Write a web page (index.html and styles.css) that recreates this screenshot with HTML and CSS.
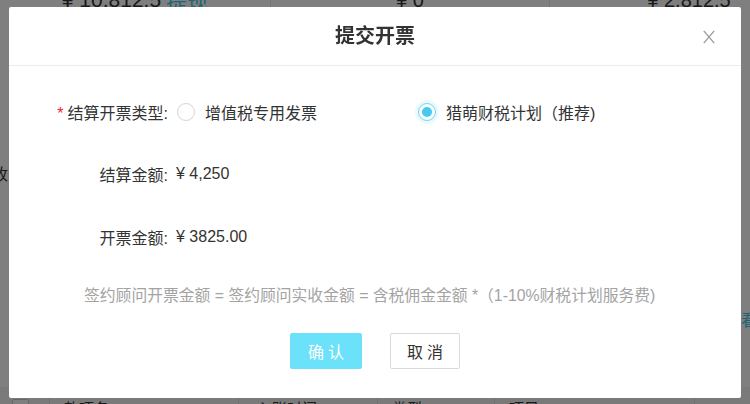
FILE: index.html
```html
<!DOCTYPE html>
<html lang="zh-CN">
<head>
<meta charset="utf-8">
<title>提交开票</title>
<link rel="stylesheet" href="styles.css">
</head>
<body>
<div class="page">
  <div class="summary">
    <div class="sum-cell">¥ 10,812.5 <span class="link">提现</span></div>
    <div class="sum-cell">¥ 0</div>
    <div class="sum-cell">¥ 2,812.5</div>
  </div>
  <div class="mid">
    <div class="stub-left">实收</div>
    <div class="stub-right"><span class="link">查看</span></div>
  </div>
  <div class="thead">
    <div class="th th-check"><span class="checkbox"></span></div>
    <div class="th th-a">款项名</div>
    <div class="th th-b">入账时间</div>
    <div class="th th-c">类型</div>
    <div class="th th-d">项目</div>
  </div>
</div>

<div class="mask"></div>

<div class="modal">
  <div class="modal-header">
    <div class="modal-title">提交开票</div>
    <span class="modal-close" aria-label="关闭">
      <svg width="12" height="14" viewBox="0 0 12 14"><path d="M0.8 0.8 L11.2 13.2 M11.2 0.8 L0.8 13.2" stroke="#9a9a9a" stroke-width="1.3" fill="none"/></svg>
    </span>
  </div>
  <div class="modal-body">
    <div class="form-row">
      <div class="form-label"><span class="req">*</span>结算开票类型:</div>
      <div class="form-value">
        <label class="radio-option">
          <span class="radio"></span>
          <span class="radio-text">增值税专用发票</span>
        </label>
        <label class="radio-option radio-option-second">
          <span class="radio radio-checked"></span>
          <span class="radio-text">猎萌财税计划（推荐)</span>
        </label>
      </div>
    </div>
    <div class="form-row row-gap">
      <div class="form-label">结算金额:</div>
      <div class="form-value">¥ 4,250</div>
    </div>
    <div class="form-row row-gap">
      <div class="form-label">开票金额:</div>
      <div class="form-value">¥ 3825.00</div>
    </div>
    <div class="note">签约顾问开票金额 = 签约顾问实收金额 = 含税佣金金额 *（1-10%财税计划服务费)</div>
    <div class="actions">
      <button class="btn btn-primary">确认</button>
      <button class="btn btn-default">取消</button>
    </div>
  </div>
</div>
</body>
</html>
```

FILE: styles.css
```css
* { box-sizing: border-box; }

html, body {
  margin: 0;
  padding: 0;
  width: 750px;
  height: 404px;
  overflow: hidden;
  background: #fff;
  font-family: "Liberation Sans", "Noto Sans CJK SC", sans-serif;
  color: #333;
}

.link { color: #3cc8e8; }

/* background page */
.page {
  margin-top: -21px;
}

.summary {
  display: grid;
  grid-template-columns: 271px 279px 279px;
  height: 42px;
}

.sum-cell {
  display: flex;
  align-items: center;
  justify-content: center;
  gap: 5px;
  font-size: 20px;
  color: #333;
  border-right: 1px solid #e6e6e6;
  white-space: nowrap;
}

.sum-cell:first-child { font-size: 21px; }

.mid {
  position: relative;
  height: 366px;
}

.stub-left {
  position: absolute;
  left: -24px;
  top: 144px;
  font-size: 16px;
  line-height: 20px;
}

.stub-right {
  position: absolute;
  left: 725px;
  top: 290px;
  font-size: 16px;
  line-height: 20px;
  white-space: nowrap;
}

.thead {
  display: grid;
  grid-template-columns: 50px 189px 139px 117px 200px;
  height: 40px;
  background: #f5f5f5;
  font-size: 15px;
}

.th {
  display: flex;
  align-items: center;
  padding-left: 14px;
  border-right: 1px solid #e3e3e3;
  color: #333;
  white-space: nowrap;
}

.th-check { padding-left: 12px; }
.th-b { padding-left: 18px; }

.checkbox {
  width: 17px;
  height: 17px;
  border: 1px solid #cfcfcf;
  background: #fff;
  border-radius: 2px;
}

/* mask */
.mask {
  position: fixed;
  inset: 0;
  background: rgba(0, 0, 0, 0.5);
}

/* modal */
.modal {
  position: fixed;
  left: 9px;
  top: 7px;
  width: 732px;
  height: 391px;
  background: #fff;
  border-radius: 2px;
  display: flex;
  flex-direction: column;
}

.modal-header {
  position: relative;
  height: 59px;
  border-bottom: 1px solid #ececec;
  display: flex;
  align-items: center;
  justify-content: center;
}

.modal-title {
  font-size: 20px;
  font-weight: 700;
  color: #333;
  line-height: 28px;
}

.modal-close {
  position: absolute;
  right: 26px;
  top: 23px;
  width: 12px;
  height: 14px;
  display: block;
}

.modal-close svg { display: block; }

.modal-body {
  display: flex;
  flex-direction: column;
  padding-top: 30px;
  font-size: 16px;
}

.form-row {
  display: flex;
  align-items: center;
  height: 32px;
}

.row-gap { margin-top: 30px; }
.row-gap + .row-gap { margin-top: 31px; }

.form-label {
  width: 167px;
  padding-right: 8px;
  text-align: right;
  color: #333;
  white-space: nowrap;
}

.req {
  color: #f5222d;
  margin-right: 4px;
}

.form-value {
  display: flex;
  align-items: center;
  color: #333;
}

.radio-option {
  display: flex;
  align-items: center;
  cursor: pointer;
}

.radio-option-second { margin-left: 100px; }

.radio {
  width: 18px;
  height: 18px;
  margin-left: 1px;
  margin-right: 10px;
  border: 1px solid #d6d6d6;
  border-radius: 50%;
  background: #fff;
  display: flex;
  align-items: center;
  justify-content: center;
}

.radio-checked {
  border-color: #66d8f4;
  box-shadow: 0 0 0 3px rgba(102, 216, 244, 0.12);
}

.radio-checked::after {
  content: "";
  width: 10px;
  height: 10px;
  border-radius: 50%;
  background: #45c9ee;
}

.radio-text { color: #333; }

.note {
  margin-top: 31px;
  padding-left: 75px;
  height: 24px;
  line-height: 24px;
  font-size: 15.8px;
  color: #a3a3a3;
  white-space: nowrap;
}

.actions {
  margin-top: 25px;
  display: flex;
  justify-content: center;
  gap: 28px;
}

.btn {
  height: 36px;
  border-radius: 2px;
  font-family: "Liberation Sans", "Noto Sans CJK SC", sans-serif;
  font-size: 16px;
  letter-spacing: 4px;
  padding: 0 0 0 4px;
  cursor: pointer;
}

.btn-primary {
  width: 72px;
  background: #6ce1fa;
  border: 1px solid #6ce1fa;
  color: #fff;
}

.btn-default {
  width: 70px;
  background: #fff;
  border: 1px solid #d9d9d9;
  color: #333;
}
```
